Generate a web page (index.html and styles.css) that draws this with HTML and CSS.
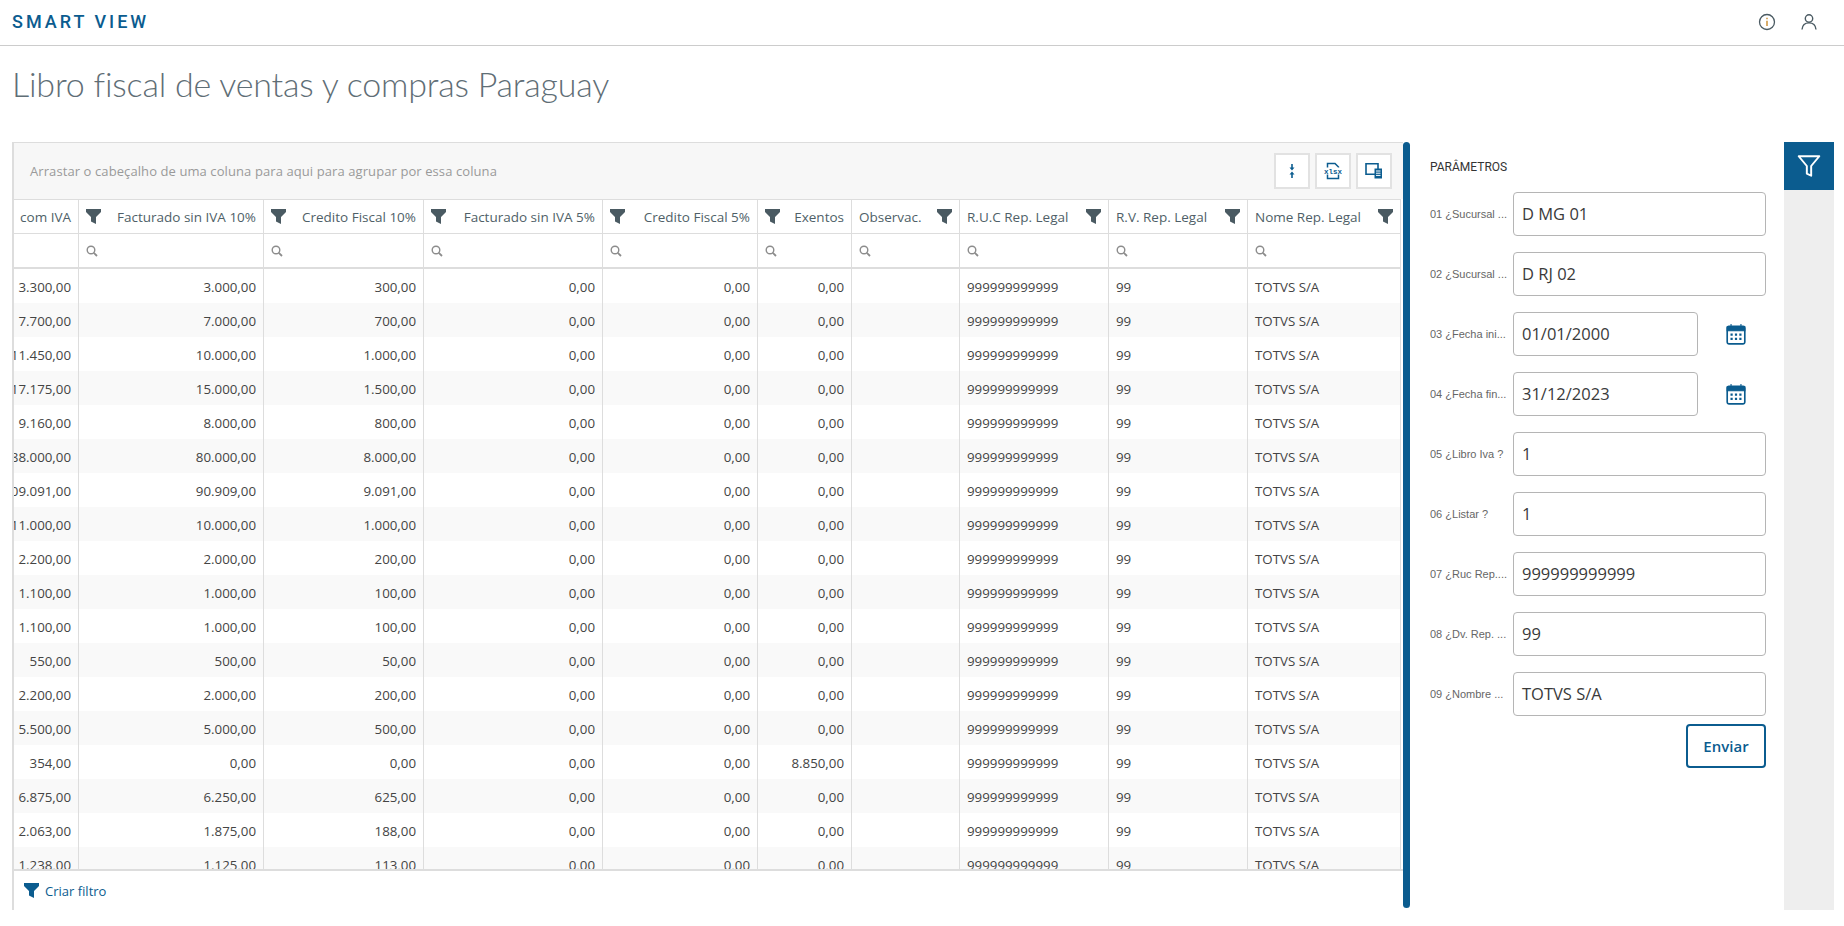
FILE: index.html
```html
<!DOCTYPE html>
<html lang="pt">
<head>
<meta charset="utf-8">
<title>Smart View</title>
<link rel="stylesheet" href="styles.css">
</head>
<body>
<svg class="defs" width="0" height="0"><defs>
<symbol id="funnel" viewBox="0 0 15 15"><path d="M0 0h15v3L10 8v7L5 12.500V8L0 3z"/></symbol>
<symbol id="lens" viewBox="0 0 12 12"><circle cx="5" cy="5" r="3.800" fill="none" stroke="currentColor" stroke-width="1.400"/><path d="M7.800 7.800L11 11" stroke="currentColor" stroke-width="1.800"/></symbol>
<symbol id="cal" viewBox="0 0 18 20"><path d="M1 4.500a1.500 1.500 0 0 1 1.500-1.500h13A1.500 1.500 0 0 1 17 4.500v13a1.500 1.500 0 0 1-1.500 1.500h-13A1.500 1.500 0 0 1 1 17.500z" fill="none" stroke="currentColor" stroke-width="1.500"/><path d="M1 3.500h16V7H1zM4.500 1v3M13.500 1v3" fill="currentColor" stroke="currentColor"/><path d="M4 9.500h2v2H4zM8 9.500h2v2H8zM12 9.500h2v2h-2zM4 13.500h2v2H4zM8 13.500h2v2H8zM12 13.500h2v2h-2z" fill="currentColor"/></symbol>
</defs></svg>
<header class="topbar">
  <span class="brand">SMART VIEW</span>
  <div class="top-icons">
    <svg class="ti" viewBox="0 0 18 18"><circle cx="9" cy="9" r="7.500" fill="none" stroke="currentColor" stroke-width="1.300"/><path d="M9 7.800v5.200M9 4.800v1.500" stroke="#c98a2b" stroke-width="1.400"/></svg>
    <svg class="ti" viewBox="0 0 18 18"><circle cx="9" cy="5.500" r="3.700" fill="none" stroke="currentColor" stroke-width="1.400"/><path d="M2 16.500c.4-4 3-6.600 7-6.600s6.600 2.600 7 6.600" fill="none" stroke="currentColor" stroke-width="1.400"/></svg>
  </div>
</header>
<h1 class="title">Libro fiscal de ventas y compras Paraguay</h1>
<main class="main">
  <section class="grid-panel">
    <div class="group-bar">
      <span class="group-hint">Arrastar o cabeçalho de uma coluna para aqui para agrupar por essa coluna</span>
      <div class="tools">
        <button class="tool"><svg viewBox="0 0 16 16" width="16" height="16"><path d="M8 1v4M8 15v-4" stroke="currentColor" stroke-width="1.600"/><path d="M5.500 4.500h5L8 7.500zM5.500 11.500h5L8 8.500z" fill="currentColor"/></svg></button>
        <button class="tool"><svg viewBox="0 0 18 18" width="18" height="18"><path d="M3.500 5.500V1.500h7.500l3.500 3.500v.5M3.500 12.500v4h11v-4" fill="none" stroke="currentColor" stroke-width="1.500"/><text x="9" y="11.500" text-anchor="middle" class="xlsx">xlsx</text></svg></button>
        <button class="tool"><svg viewBox="0 0 18 18" width="18" height="18"><path d="M1 1.800h12v10.500H1z" fill="none" stroke="currentColor" stroke-width="1.600"/><path d="M9.500 6.500h7.500v10H9.500z" fill="currentColor"/><path d="M11 9h4.500M11 11.200h4.500M11 13.400h4.500" stroke="#fff"/></svg></button>
      </div>
    </div>
    <div class="table-wrap">
      <table class="data">
        <colgroup><col class="c1"><col class="c2"><col class="c3"><col class="c4"><col class="c5"><col class="c6"><col class="c7"><col class="c8"><col class="c9"><col class="c10"></colgroup>
        <thead>
          <tr class="head">
            <th><div class="hd end"><span>com IVA</span></div></th>
            <th><div class="hd"><svg class="fn"><use href="#funnel"/></svg><span>Facturado sin IVA 10%</span></div></th>
            <th><div class="hd"><svg class="fn"><use href="#funnel"/></svg><span>Credito Fiscal 10%</span></div></th>
            <th><div class="hd"><svg class="fn"><use href="#funnel"/></svg><span>Facturado sin IVA 5%</span></div></th>
            <th><div class="hd"><svg class="fn"><use href="#funnel"/></svg><span>Credito Fiscal 5%</span></div></th>
            <th><div class="hd"><svg class="fn"><use href="#funnel"/></svg><span>Exentos</span></div></th>
            <th><div class="hd"><span>Observac.</span><svg class="fn"><use href="#funnel"/></svg></div></th>
            <th><div class="hd"><span>R.U.C Rep. Legal</span><svg class="fn"><use href="#funnel"/></svg></div></th>
            <th><div class="hd"><span>R.V. Rep. Legal</span><svg class="fn"><use href="#funnel"/></svg></div></th>
            <th><div class="hd"><span>Nome Rep. Legal</span><svg class="fn"><use href="#funnel"/></svg></div></th>
          </tr>
          <tr class="search">
            <th></th>
            <th><svg class="ln"><use href="#lens"/></svg></th><th><svg class="ln"><use href="#lens"/></svg></th><th><svg class="ln"><use href="#lens"/></svg></th><th><svg class="ln"><use href="#lens"/></svg></th><th><svg class="ln"><use href="#lens"/></svg></th><th><svg class="ln"><use href="#lens"/></svg></th><th><svg class="ln"><use href="#lens"/></svg></th><th><svg class="ln"><use href="#lens"/></svg></th><th><svg class="ln"><use href="#lens"/></svg></th>
          </tr>
        </thead>
        <tbody>
          <tr><td class="n"><div>3.300,00</div></td><td class="n">3.000,00</td><td class="n">300,00</td><td class="n">0,00</td><td class="n">0,00</td><td class="n">0,00</td><td></td><td>999999999999</td><td>99</td><td>TOTVS S/A</td></tr>
          <tr><td class="n"><div>7.700,00</div></td><td class="n">7.000,00</td><td class="n">700,00</td><td class="n">0,00</td><td class="n">0,00</td><td class="n">0,00</td><td></td><td>999999999999</td><td>99</td><td>TOTVS S/A</td></tr>
          <tr><td class="n"><div>11.450,00</div></td><td class="n">10.000,00</td><td class="n">1.000,00</td><td class="n">0,00</td><td class="n">0,00</td><td class="n">0,00</td><td></td><td>999999999999</td><td>99</td><td>TOTVS S/A</td></tr>
          <tr><td class="n"><div>17.175,00</div></td><td class="n">15.000,00</td><td class="n">1.500,00</td><td class="n">0,00</td><td class="n">0,00</td><td class="n">0,00</td><td></td><td>999999999999</td><td>99</td><td>TOTVS S/A</td></tr>
          <tr><td class="n"><div>9.160,00</div></td><td class="n">8.000,00</td><td class="n">800,00</td><td class="n">0,00</td><td class="n">0,00</td><td class="n">0,00</td><td></td><td>999999999999</td><td>99</td><td>TOTVS S/A</td></tr>
          <tr><td class="n"><div>88.000,00</div></td><td class="n">80.000,00</td><td class="n">8.000,00</td><td class="n">0,00</td><td class="n">0,00</td><td class="n">0,00</td><td></td><td>999999999999</td><td>99</td><td>TOTVS S/A</td></tr>
          <tr><td class="n"><div>109.091,00</div></td><td class="n">90.909,00</td><td class="n">9.091,00</td><td class="n">0,00</td><td class="n">0,00</td><td class="n">0,00</td><td></td><td>999999999999</td><td>99</td><td>TOTVS S/A</td></tr>
          <tr><td class="n"><div>11.000,00</div></td><td class="n">10.000,00</td><td class="n">1.000,00</td><td class="n">0,00</td><td class="n">0,00</td><td class="n">0,00</td><td></td><td>999999999999</td><td>99</td><td>TOTVS S/A</td></tr>
          <tr><td class="n"><div>2.200,00</div></td><td class="n">2.000,00</td><td class="n">200,00</td><td class="n">0,00</td><td class="n">0,00</td><td class="n">0,00</td><td></td><td>999999999999</td><td>99</td><td>TOTVS S/A</td></tr>
          <tr><td class="n"><div>1.100,00</div></td><td class="n">1.000,00</td><td class="n">100,00</td><td class="n">0,00</td><td class="n">0,00</td><td class="n">0,00</td><td></td><td>999999999999</td><td>99</td><td>TOTVS S/A</td></tr>
          <tr><td class="n"><div>1.100,00</div></td><td class="n">1.000,00</td><td class="n">100,00</td><td class="n">0,00</td><td class="n">0,00</td><td class="n">0,00</td><td></td><td>999999999999</td><td>99</td><td>TOTVS S/A</td></tr>
          <tr><td class="n"><div>550,00</div></td><td class="n">500,00</td><td class="n">50,00</td><td class="n">0,00</td><td class="n">0,00</td><td class="n">0,00</td><td></td><td>999999999999</td><td>99</td><td>TOTVS S/A</td></tr>
          <tr><td class="n"><div>2.200,00</div></td><td class="n">2.000,00</td><td class="n">200,00</td><td class="n">0,00</td><td class="n">0,00</td><td class="n">0,00</td><td></td><td>999999999999</td><td>99</td><td>TOTVS S/A</td></tr>
          <tr><td class="n"><div>5.500,00</div></td><td class="n">5.000,00</td><td class="n">500,00</td><td class="n">0,00</td><td class="n">0,00</td><td class="n">0,00</td><td></td><td>999999999999</td><td>99</td><td>TOTVS S/A</td></tr>
          <tr><td class="n"><div>354,00</div></td><td class="n">0,00</td><td class="n">0,00</td><td class="n">0,00</td><td class="n">0,00</td><td class="n">8.850,00</td><td></td><td>999999999999</td><td>99</td><td>TOTVS S/A</td></tr>
          <tr><td class="n"><div>6.875,00</div></td><td class="n">6.250,00</td><td class="n">625,00</td><td class="n">0,00</td><td class="n">0,00</td><td class="n">0,00</td><td></td><td>999999999999</td><td>99</td><td>TOTVS S/A</td></tr>
          <tr><td class="n"><div>2.063,00</div></td><td class="n">1.875,00</td><td class="n">188,00</td><td class="n">0,00</td><td class="n">0,00</td><td class="n">0,00</td><td></td><td>999999999999</td><td>99</td><td>TOTVS S/A</td></tr>
          <tr><td class="n"><div>1.238,00</div></td><td class="n">1.125,00</td><td class="n">113,00</td><td class="n">0,00</td><td class="n">0,00</td><td class="n">0,00</td><td></td><td>999999999999</td><td>99</td><td>TOTVS S/A</td></tr>
        </tbody>
      </table>
    </div>
    <div class="grid-foot"><svg class="fn-blue"><use href="#funnel"/></svg><span>Criar filtro</span></div>
  </section>
  <div class="splitter"></div>
  <aside class="params">
    <div class="params-title">PARÂMETROS</div>
    <div class="field"><label>01 ¿Sucursal ...</label><div class="inp">D MG 01</div></div>
    <div class="field"><label>02 ¿Sucursal ...</label><div class="inp">D RJ 02</div></div>
    <div class="field"><label>03 ¿Fecha ini...</label><div class="inp short">01/01/2000</div><svg class="cal"><use href="#cal"/></svg></div>
    <div class="field"><label>04 ¿Fecha fin...</label><div class="inp short">31/12/2023</div><svg class="cal"><use href="#cal"/></svg></div>
    <div class="field"><label>05 ¿Libro Iva ?</label><div class="inp">1</div></div>
    <div class="field"><label>06 ¿Listar ?</label><div class="inp">1</div></div>
    <div class="field"><label>07 ¿Ruc Rep....</label><div class="inp">999999999999</div></div>
    <div class="field"><label>08 ¿Dv. Rep. ...</label><div class="inp">99</div></div>
    <div class="field"><label>09 ¿Nombre ...</label><div class="inp">TOTVS S/A</div></div>
    <div class="send-row"><button class="send">Enviar</button></div>
  </aside>
  <div class="strip">
    <div class="strip-btn"><svg viewBox="0 0 24 24" width="26" height="26"><path d="M2.500 3h19l-7.500 9v9l-4-2v-7z" fill="none" stroke="#fff" stroke-width="1.800" stroke-linejoin="round"/></svg></div>
  </div>
</main>
</body>
</html>
```
FILE: styles.css
```css
* { box-sizing: border-box; }
html, body { margin: 0; padding: 0; }
body { font-family: "Open Sans", "Noto Sans", sans-serif; color: #444; background: #fff; height: 926px; overflow: hidden; }
.defs { position: absolute; }
.topbar { height: 46px; border-bottom: 1px solid #ccc; display: flex; align-items: center; justify-content: space-between; padding: 0 26px 2px 12px; }
.brand { font-family: Roboto, sans-serif; font-size: 18px; font-weight: 500; letter-spacing: 3px; color: #0b5c8f; }
.top-icons { display: flex; gap: 24px; color: #4a5a62; }
.ti { width: 18px; height: 18px; display: block; }
.title { margin: 0; height: 96px; padding: 14px 0 0 12px; font-family: Lato, sans-serif; font-weight: 300; font-size: 34px; letter-spacing: -0.2px; line-height: 48px; color: #5f6e76; }
.main { display: flex; height: 768px; padding-left: 12px; }
.grid-panel { width: 1391px; display: flex; flex-direction: column; border-left: 2px solid #ddd; border-top: 1px solid #ddd; }
.group-bar { height: 56px; flex: none; background: #f7f7f7; display: flex; align-items: center; justify-content: space-between; padding: 0 11px 0 16px; }
.group-hint { font-size: 13px; letter-spacing: 0.09px; color: #9a9a9a; }
.tools { display: flex; gap: 5px; }
.tool { width: 36px; height: 36px; padding: 0; background: #fff; border: 2px solid #e2e2e2; border-radius: 0; color: #0b5c8f; display: flex; align-items: center; justify-content: center; }
.xlsx { font-family: "Liberation Mono", monospace; font-size: 7.500px; font-weight: 700; fill: #0b5c8f; }
.table-wrap { height: 672px; flex: none; overflow: hidden; border-bottom: 2px solid #ddd; }
.data { table-layout: fixed; width: 1387px; border-collapse: separate; border-spacing: 0; font-size: 13.300px; color: #444; }
.c1 { width: 65px; } .c2 { width: 185px; } .c3 { width: 160px; } .c4 { width: 179px; } .c5 { width: 155px; }
.c6 { width: 94px; } .c7 { width: 108px; } .c8 { width: 149px; } .c9 { width: 139px; } .c10 { width: 153px; }
.data th { padding: 0 7px; font-size: 13.500px; font-weight: 500; text-align: left; border-right: 1px solid #ddd; border-top: 1px solid #ddd; background: #fff; overflow: hidden; white-space: nowrap; color: #4f5f68; }
.head th { height: 34px; }
.search th { height: 36px; border-bottom: 2px solid #ddd; }
.hd { display: flex; align-items: center; justify-content: space-between; }
.hd.end { justify-content: flex-end; }
.fn { width: 15px; height: 15px; fill: #4a5a62; flex: none; }
.ln { width: 12px; height: 12px; color: #8c8c8c; display: block; }
.data td { height: 34px; padding: 1px 7px 0; border-right: 1px solid #ddd; white-space: nowrap; overflow: hidden; }
.data td.n { text-align: right; }
.data td.n div { display: flex; justify-content: flex-end; }
.data tbody tr:nth-child(even) td { background: #f9f9f9; }
.grid-foot { flex: 1; display: flex; align-items: center; gap: 6px; padding: 0 0 0 10px; font-size: 13px; color: #0b5c8f; }
.fn-blue { width: 15px; height: 15px; fill: #0b5c8f; }
.splitter { width: 7px; height: 766px; background: #0b5c8f; border-radius: 4px; flex: none; }
.params { width: 374px; flex: none; padding: 0 18px 0 20px; }
.params-title { height: 50px; padding-top: 17px; font-family: Roboto, sans-serif; font-size: 12px; color: #333; line-height: 16px; }
.field { display: flex; align-items: center; height: 44px; margin-bottom: 16px; }
.field label { width: 83px; flex: none; font-family: "Liberation Sans", sans-serif; font-size: 11px; color: #666; white-space: nowrap; }
.inp { flex: 1; height: 44px; border: 1px solid #b5b5b5; border-radius: 4px; display: flex; align-items: center; padding: 0 8px 1px; font-size: 16.500px; color: #3a3a3a; }
.inp.short { flex: none; width: 185px; }
.cal { width: 20px; height: 22px; margin-left: 28px; color: #0b5c8f; }
.send-row { display: flex; justify-content: flex-end; margin-top: -8px; }
.send { width: 80px; height: 44px; background: #fff; border: 2px solid #0b5c8f; border-radius: 4px; color: #0b5c8f; font-family: "Open Sans", sans-serif; font-size: 15px; font-weight: 600; }
.strip { width: 50px; flex: none; background: #eee; }
.strip-btn { height: 48px; background: #0b5c8f; display: flex; align-items: center; justify-content: center; }
```
